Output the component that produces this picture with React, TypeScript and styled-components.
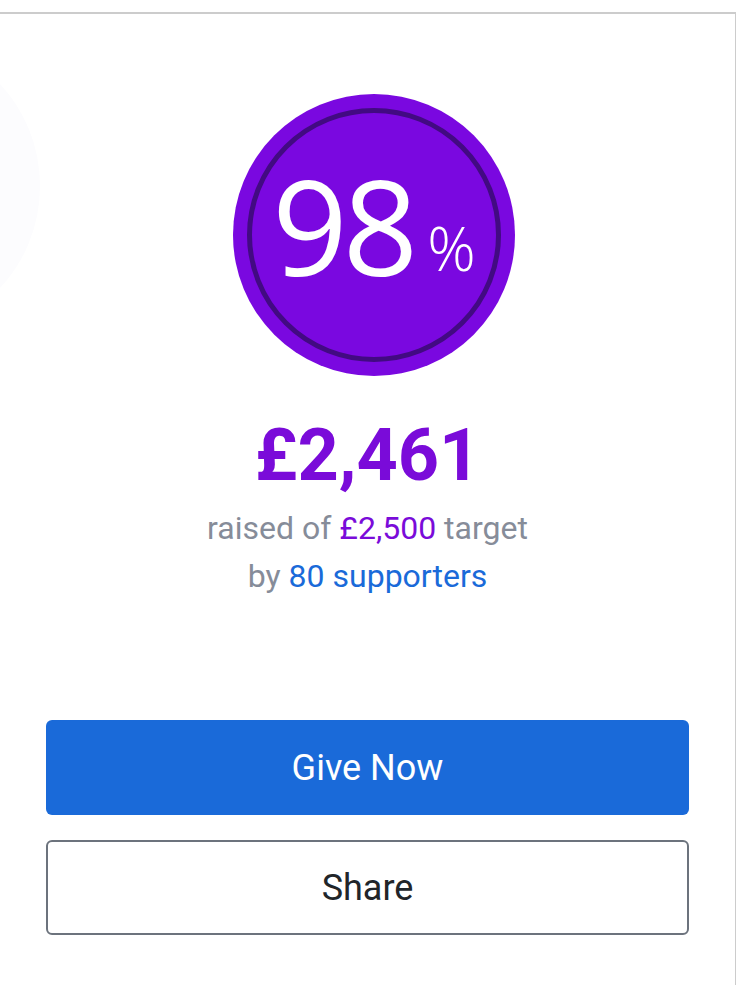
import React from "react";
import styled, { createGlobalStyle } from "styled-components";

const Global = createGlobalStyle`
  html, body { margin: 0; padding: 0; background: #ffffff; }
  body { font-family: Roboto, "Liberation Sans", sans-serif; }
`;

const Page = styled.div`
  padding-top: 12px;
  width: 738px;
  height: 973px;
  overflow: hidden;
`;

const Card = styled.section`
  position: relative;
  width: 735px;
  height: 980px;
  border-top: 2px solid #cccccc;
  border-right: 1px solid #cccccc;
  background: #ffffff;
  display: flex;
  flex-direction: column;
  align-items: center;
  overflow: hidden;
`;

const Ghost = styled.div`
  position: absolute;
  left: -250px;
  top: 24px;
  width: 290px;
  height: 296px;
  border-radius: 50%;
  background: #fcfcfe;
`;

const Badge = styled.div`
  margin-top: 80px;
  margin-left: 13px;
  width: 282px;
  height: 282px;
  border-radius: 50%;
  background: #7a08e0;
  display: flex;
  align-items: center;
  justify-content: center;
`;

const Ring = styled.div`
  width: 244px;
  height: 244px;
  border-radius: 50%;
  border: 5px solid #420a82;
  display: flex;
  align-items: center;
  justify-content: center;
  color: #ffffff;
  font-family: "Open Sans", "Noto Sans", sans-serif;
`;

const Value = styled.span`
  font-size: 132px;
  font-weight: 400;
  letter-spacing: -5px;
  line-height: 1;
  margin-right: 14px;
  margin-bottom: 20px;
`;

const Percent = styled.span`
  font-size: 60px;
  font-weight: 300;
  line-height: 1;
  align-self: center;
  margin-top: 26px;
`;

const Amount = styled.div`
  margin-top: 38px;
  font-family: Roboto, sans-serif;
  font-weight: 700;
  font-size: 72px;
  line-height: 84px;
  color: #7a0bd9;
`;

const Lines = styled.div`
  margin-top: 6px;
  display: flex;
  flex-direction: column;
  align-items: center;
`;

const Line = styled.div`
  font-family: Roboto, sans-serif;
  font-size: 32px;
  line-height: 48px;
  color: #868c99;
`;

const Highlight = styled.span<{ $tone: "purple" | "blue" }>`
  color: ${(p) => (p.$tone === "purple" ? "#7a0bd9" : "#1a6ad9")};
`;

const Actions = styled.div`
  align-self: stretch;
  margin: 120px 46px 0 46px;
  display: flex;
  flex-direction: column;
  gap: 25px;
`;

const Button = styled.button<{ $variant: "primary" | "outline" }>`
  height: 95px;
  border-radius: 6px;
  font-family: Roboto, sans-serif;
  font-size: 36px;
  cursor: pointer;
  ${(p) =>
    p.$variant === "primary"
      ? `background: #1a6ad9; color: #ffffff; border: none;`
      : `background: #ffffff; color: #212529; border: 2px solid #6c737d;`}
`;

export default function App() {
  return (
    <>
      <Global />
      <Page>
        <Card>
          <Ghost />
          <Badge>
            <Ring>
              <Value>98</Value>
              <Percent>%</Percent>
            </Ring>
          </Badge>
          <Amount>£2,461</Amount>
          <Lines>
            <Line>
              raised of <Highlight $tone="purple">£2,500</Highlight> target
            </Line>
            <Line>
              by <Highlight $tone="blue">80 supporters</Highlight>
            </Line>
          </Lines>
          <Actions>
            <Button $variant="primary">Give Now</Button>
            <Button $variant="outline">Share</Button>
          </Actions>
        </Card>
      </Page>
    </>
  );
}
